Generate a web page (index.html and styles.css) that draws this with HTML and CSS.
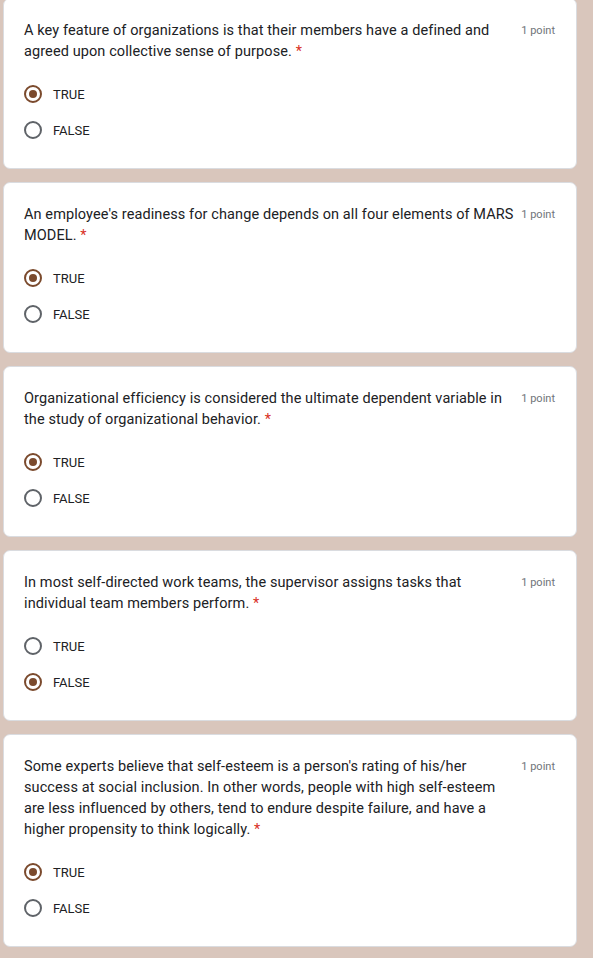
FILE: index.html
```html
<!DOCTYPE html>
<html lang="en">
<head>
  <meta charset="UTF-8">
  <meta name="viewport" content="width=device-width, initial-scale=1">
  <title>Quiz</title>
  <link rel="stylesheet" href="styles.css">
</head>
<body>
  <div class="form-page">
    <div class="question-list">

      <div class="question-card">
        <div class="question-head">
          <div class="question-text">A key feature of organizations is that their members have a defined and agreed upon collective sense of purpose. <span class="required">*</span></div>
          <div class="points">1 point</div>
        </div>
        <div class="options">
          <label class="option"><span class="radio checked"></span>TRUE</label>
          <label class="option"><span class="radio"></span>FALSE</label>
        </div>
      </div>

      <div class="question-card">
        <div class="question-head">
          <div class="question-text">An employee's readiness for change depends on all four elements of MARS MODEL. <span class="required">*</span></div>
          <div class="points">1 point</div>
        </div>
        <div class="options">
          <label class="option"><span class="radio checked"></span>TRUE</label>
          <label class="option"><span class="radio"></span>FALSE</label>
        </div>
      </div>

      <div class="question-card">
        <div class="question-head">
          <div class="question-text">Organizational efficiency is considered the ultimate dependent variable in the study of organizational behavior. <span class="required">*</span></div>
          <div class="points">1 point</div>
        </div>
        <div class="options">
          <label class="option"><span class="radio checked"></span>TRUE</label>
          <label class="option"><span class="radio"></span>FALSE</label>
        </div>
      </div>

      <div class="question-card">
        <div class="question-head">
          <div class="question-text">In most self-directed work teams, the supervisor assigns tasks that individual team members perform. <span class="required">*</span></div>
          <div class="points">1 point</div>
        </div>
        <div class="options">
          <label class="option"><span class="radio"></span>TRUE</label>
          <label class="option"><span class="radio checked"></span>FALSE</label>
        </div>
      </div>

      <div class="question-card">
        <div class="question-head">
          <div class="question-text">Some experts believe that self-esteem is a person's rating of his/her success at social inclusion. In other words, people with high self-esteem are less influenced by others, tend to endure despite failure, and have a higher propensity to think logically. <span class="required">*</span></div>
          <div class="points">1 point</div>
        </div>
        <div class="options">
          <label class="option"><span class="radio checked"></span>TRUE</label>
          <label class="option"><span class="radio"></span>FALSE</label>
        </div>
      </div>

    </div>
  </div>
</body>
</html>
```

FILE: styles.css
```css
body {
  margin: 0;
  padding: 0;
  background-color: #ffffff;
  font-family: Roboto, Arial, sans-serif;
  overflow: hidden;
}
.form-page {
  width: 593px;
  min-height: 100vh;
  background-color: #d9c6bc;
  box-sizing: border-box;
  padding: 0 16px 0 3px;
}
.question-list {
  display: flex;
  flex-direction: column;
  gap: 13px;
  margin-top: -2px;
}
.question-card {
  background-color: white;
  border: 1px solid #dadce0;
  border-radius: 7px;
  padding: 21px 21px 20px 20px;
}
.question-head {
  display: flex;
  align-items: flex-start;
  gap: 4px;
}
.question-text {
  flex: 1;
  color: #202124;
  font-size: 14.5px;
  line-height: 21px;
  letter-spacing: 0.1px;
}
.required {
  color: #d93025;
}
.points {
  color: #70757a;
  font-size: 11px;
  line-height: 21px;
  white-space: nowrap;
}
.options {
  margin-top: 14px;
  display: flex;
  flex-direction: column;
}
.option {
  display: flex;
  align-items: center;
  height: 36px;
  gap: 11px;
  color: #202124;
  font-size: 13px;
}
.radio {
  width: 18px;
  height: 18px;
  box-sizing: border-box;
  border: 2px solid #5f6368;
  border-radius: 50%;
  display: flex;
  align-items: center;
  justify-content: center;
}
.radio.checked {
  border-color: #7b4a2d;
}
.radio.checked::after {
  content: "";
  width: 8px;
  height: 8px;
  border-radius: 50%;
  background-color: #7b4a2d;
}
```
